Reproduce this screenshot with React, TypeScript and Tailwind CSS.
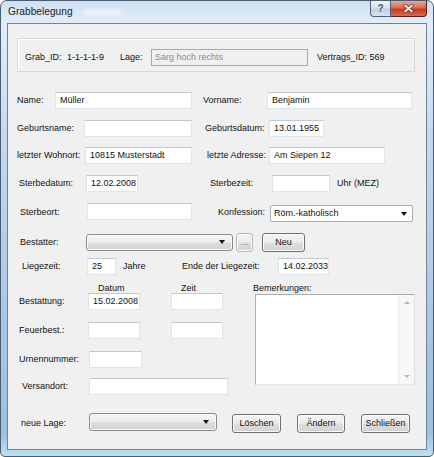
import React from 'react';

type BoxProps = { className?: string; children?: React.ReactNode };

// Vista-style white text field
function Field({ className = '', children }: BoxProps) {
  return (
    <div
      className={`h-[17px] shrink-0 bg-white border border-[#dfe4ea] border-t-[#c4c8ce] flex items-center pl-[4px] whitespace-nowrap overflow-hidden ${className}`}
    >
      {children}
    </div>
  );
}

function Label({ className = '', children }: BoxProps) {
  return <span className={`shrink-0 whitespace-nowrap ${className}`}>{children}</span>;
}

function Arrow() {
  return (
    <span className="w-0 h-0 border-l-[3.5px] border-r-[3.5px] border-t-[4px] border-l-transparent border-r-transparent border-t-[#111]" />
  );
}

// Gray gradient push button
function Button({ className = '', children }: BoxProps) {
  return (
    <div
      className={`shrink-0 h-[19px] rounded-[3px] border border-[#707070] bg-[linear-gradient(#f4f4f4_0%,#ececec_48%,#dedede_52%,#d2d2d2_100%)] shadow-[inset_0_0_0_1px_#fbfbfb] flex items-center justify-center ${className}`}
    >
      {children}
    </div>
  );
}

// Dropdown rendered as a button (combobox without text)
function Combo({ className = '' }: BoxProps) {
  return (
    <div
      className={`shrink-0 rounded-[3px] border border-[#8a8a8a] bg-[linear-gradient(#f4f4f4_0%,#ececec_48%,#dedede_52%,#d4d4d4_100%)] shadow-[inset_0_0_0_1px_#fbfbfb] flex items-center justify-end pr-[7px] ${className}`}
    >
      <Arrow />
    </div>
  );
}

export default function App() {
  return (
    <div className="w-[434px] h-[457px] bg-white font-['Liberation_Sans',Arial,sans-serif] text-[9px] text-[#111] leading-none">
      <div className="w-[434px] h-[457px] rounded-t-[7px] rounded-b-[5px] border border-[#4a5d72] bg-[linear-gradient(180deg,#cfe0f1_0%,#e2edf8_5%,#c4d9ee_30%,#a9c7e5_70%,#9cbfe2_95%,#bfe0f0_100%)] flex flex-col">
        {/* Title bar */}
        <div className="h-[22px] flex items-start shrink-0">
          <div className="h-[22px] flex items-center pl-[7px]">
            <span className="text-[10.2px] text-[#1e1e1e]">Grabbelegung</span>
            <span className="ml-[10px] w-[40px] h-[6px] rounded-full bg-white/50 blur-[2px]" />
          </div>
          <div className="ml-auto mr-[6px] flex">
            <div className="w-[21px] h-[16px] rounded-bl-[4px] border border-t-0 border-[#4f6377] bg-[linear-gradient(#eef3f8_0%,#d8e2ec_45%,#c2d0de_55%,#d9e4ef_100%)] flex items-center justify-center text-[10px] text-[#4a5869] font-bold">
              ?
            </div>
            <div className="w-[36px] h-[16px] rounded-br-[4px] border border-l-0 border-t-0 border-[#5b2118] bg-[linear-gradient(#e9a897_0%,#d76b55_45%,#c43c22_55%,#d86a4c_100%)] flex items-center justify-center">
              <svg width="11" height="9" viewBox="0 0 11 9">
                <path d="M2 1.5 L9 7.5 M9 1.5 L2 7.5" stroke="#5a1e14" strokeWidth="3" strokeLinecap="round" />
                <path d="M2 1.5 L9 7.5 M9 1.5 L2 7.5" stroke="#ffffff" strokeWidth="1.8" strokeLinecap="round" />
              </svg>
            </div>
          </div>
        </div>

        {/* Client area */}
        <div className="ml-[6px] mr-[6px] h-[427px] border border-[#6f8396] bg-[#f0f0f0] flex flex-col shrink-0">
          {/* Header group */}
          <div className="mt-[14px] ml-[9px] w-[398px] h-[34px] border border-[#d8d8d8] shadow-[inset_1px_1px_0_#ffffff] flex items-center pl-[7px] pt-[4px]">
            <Label className="w-[42px]">Grab_ID:</Label>
            <Label className="w-[53px]">1-1-1-1-9</Label>
            <Label className="w-[31px]">Lage:</Label>
            <div className="w-[157px] h-[17px] border border-[#a9a9a9] bg-[#f0f0f0] flex items-center pl-[3px] text-[#8a8a8a]">
              Sarg hoch rechts
            </div>
            <Label className="ml-[9px]">Vertrags_ID: 569</Label>
          </div>

          {/* Name */}
          <div className="mt-[20px] h-[17px] flex items-center pl-[9px]">
            <Label className="w-[38px]">Name:</Label>
            <Field className="w-[137px]">Müller</Field>
            <Label className="ml-[11px] w-[64px]">Vorname:</Label>
            <Field className="w-[145px]">Benjamin</Field>
          </div>

          {/* Geburtsname */}
          <div className="mt-[11px] h-[17px] flex items-center pl-[9px]">
            <Label className="w-[67px]">Geburtsname:</Label>
            <Field className="w-[108px]" />
            <Label className="ml-[13px] w-[64px]">Geburtsdatum:</Label>
            <Field className="w-[55px]">13.01.1955</Field>
          </div>

          {/* Wohnort */}
          <div className="mt-[10px] h-[17px] flex items-center pl-[9px]">
            <Label className="w-[68px]">letzter Wohnort:</Label>
            <Field className="w-[107px]">10815 Musterstadt</Field>
            <Label className="ml-[15px] w-[62px]">letzte Adresse:</Label>
            <Field className="w-[116px]">Am Siepen 12</Field>
          </div>

          {/* Sterbedatum */}
          <div className="mt-[11px] h-[17px] flex items-center pl-[11px]">
            <Label className="w-[67px]">Sterbedatum:</Label>
            <Field className="w-[52px]">12.02.2008</Field>
            <Label className="ml-[72px] w-[62px]">Sterbezeit:</Label>
            <Field className="w-[58px]" />
            <Label className="ml-[7px]">Uhr (MEZ)</Label>
          </div>

          {/* Sterbeort */}
          <div className="mt-[11px] h-[19px] flex items-center pl-[12px]">
            <Label className="w-[67px]">Sterbeort:</Label>
            <Field className="w-[105px] self-start" />
            <Label className="ml-[26px] w-[52px]">Konfession:</Label>
            <div className="self-end w-[143px] h-[17px] rounded-[2px] border border-[#a7adb4] bg-white flex items-center pl-[3px] pr-[5px]">
              <span>Röm.-katholisch</span>
              <span className="ml-auto flex">
                <Arrow />
              </span>
            </div>
          </div>

          {/* Bestatter */}
          <div className="mt-[11px] h-[18px] flex items-center pl-[12px]">
            <Label className="w-[66px]">Bestatter:</Label>
            <Combo className="w-[147px] h-[17px]" />
            <Button className="ml-[3px] w-[17px] h-[17px] border-[#b3b8bd] text-[#7a7a7a] items-end pb-[4px]">...</Button>
            <Button className="ml-[9px] w-[43px] h-[18px]">Neu</Button>
          </div>

          {/* Liegezeit */}
          <div className="mt-[7px] h-[17px] flex items-center pl-[14px]">
            <Label className="w-[65px]">Liegezeit:</Label>
            <Field className="w-[29px]">25</Field>
            <Label className="ml-[7px] w-[59px]">Jahre</Label>
            <Label className="w-[96px]">Ende der Liegezeit:</Label>
            <Field className="w-[51px]">14.02.2033</Field>
          </div>

          {/* Lower section */}
          <div className="mt-[8px] flex">
            <div className="w-[222px] flex flex-col">
              <div className="h-[10px] flex items-center">
                <Label className="ml-[90px] w-[83px]">Datum</Label>
                <Label>Zeit</Label>
              </div>
              <div className="h-[17px] flex items-center pl-[11px]">
                <Label className="w-[69px]">Bestattung:</Label>
                <Field className="w-[52px]">15.02.2008</Field>
                <Field className="ml-[31px] w-[52px]" />
              </div>
              <div className="mt-[12px] h-[17px] flex items-center pl-[11px]">
                <Label className="w-[69px]">Feuerbest.:</Label>
                <Field className="w-[52px]" />
                <Field className="ml-[31px] w-[52px]" />
              </div>
              <div className="mt-[12px] h-[17px] flex items-center pl-[11px]">
                <Label className="w-[70px]">Urnennummer:</Label>
                <Field className="w-[53px]" />
              </div>
              <div className="mt-[10px] h-[16px] flex items-center pl-[14px]">
                <Label className="w-[67px]">Versandort:</Label>
                <Field className="w-[139px] h-[16px]" />
              </div>
            </div>
            <div className="ml-[23px] flex flex-col">
              <Label className="h-[10px] flex items-center">Bemerkungen:</Label>
              <div className="ml-[2px] mt-[1px] w-[160px] h-[91px] border border-[#abadb3] border-b-[#e3e9ef] border-r-[#dbdfe6] bg-white flex justify-end">
                <div className="w-[16px] bg-[#f7f7f7] border-l border-[#ebebeb] flex flex-col items-center justify-between py-[6px]">
                  <span className="w-0 h-0 border-l-[3px] border-r-[3px] border-b-[3px] border-l-transparent border-r-transparent border-b-[#b8b8b8]" />
                  <span className="w-0 h-0 border-l-[3px] border-r-[3px] border-t-[3px] border-l-transparent border-r-transparent border-t-[#b8b8b8]" />
                </div>
              </div>
            </div>
          </div>

          {/* Bottom bar */}
          <div className="mt-[19px] h-[20px] flex items-center pl-[13px]">
            <Label className="w-[68px]">neue Lage:</Label>
            <Combo className="w-[128px] h-[18px] self-start" />
            <Button className="ml-[15px] w-[49px]">Löschen</Button>
            <Button className="ml-[16px] w-[48px]">Ändern</Button>
            <Button className="ml-[16px] w-[49px]">Schließen</Button>
          </div>
        </div>
      </div>
    </div>
  );
}
